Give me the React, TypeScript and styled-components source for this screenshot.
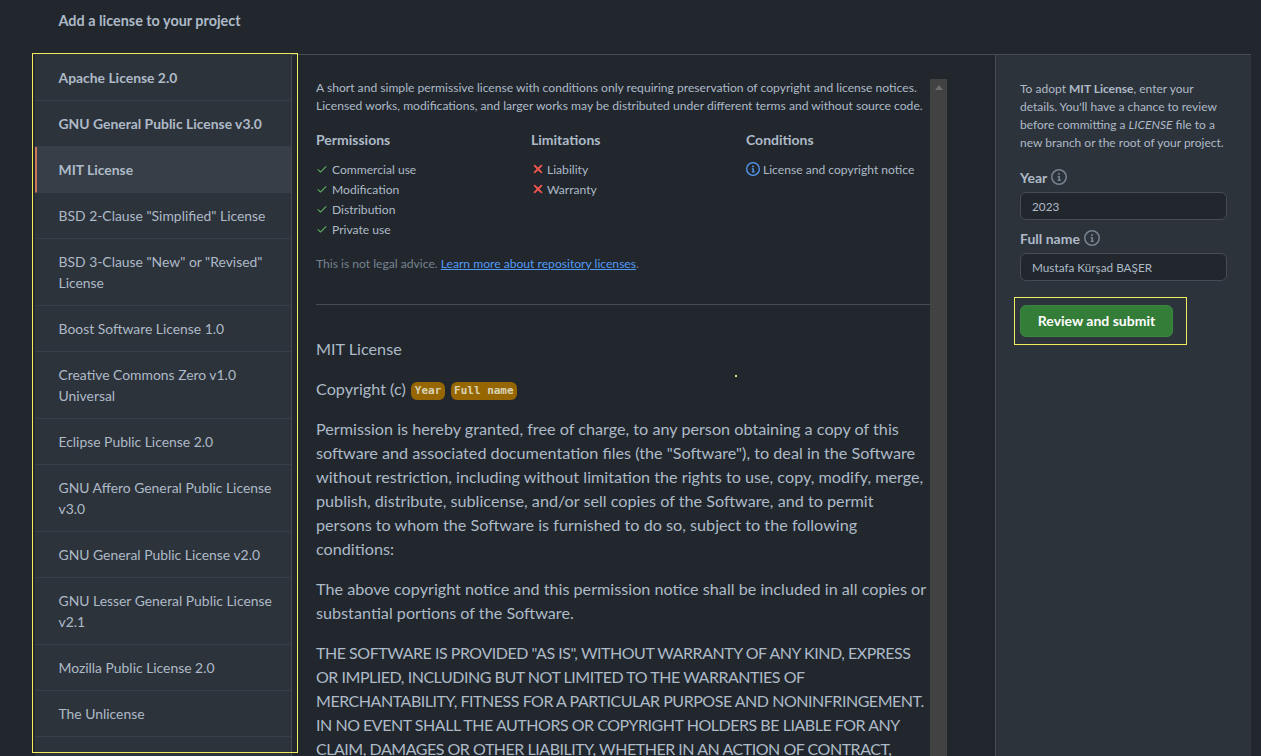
import styled, { createGlobalStyle } from 'styled-components';

const GlobalStyle = createGlobalStyle`
  html, body {
    margin: 0;
    height: 100%;
    overflow: hidden;
    background: #22272e;
  }
  body {
    font-family: Lato, "Noto Sans", sans-serif;
    color: #adbac7;
  }
`;

const CHECK =
  'M13.78 4.22a.75.75 0 0 1 0 1.06l-7.25 7.25a.75.75 0 0 1-1.06 0L2.22 9.28a.751.751 0 0 1 .018-1.042.751.751 0 0 1 1.042-.018L6 10.94l6.72-6.72a.75.75 0 0 1 1.06 0Z';
const CROSS =
  'M3.72 3.72a.75.75 0 0 1 1.06 0L8 6.94l3.22-3.22a.749.749 0 0 1 1.275.326.749.749 0 0 1-.215.734L9.06 8l3.22 3.22a.749.749 0 0 1-.326 1.275.749.749 0 0 1-.734-.215L8 9.06l-3.22 3.22a.751.751 0 0 1-1.042-.018.751.751 0 0 1-.018-1.042L6.94 8 3.72 4.78a.75.75 0 0 1 0-1.06Z';
const INFO =
  'M0 8a8 8 0 1 1 16 0A8 8 0 0 1 0 8Zm8-6.5a6.5 6.5 0 1 0 0 13 6.5 6.5 0 0 0 0-13ZM6.5 7.75A.75.75 0 0 1 7.25 7h1a.75.75 0 0 1 .75.75v2.75h.25a.75.75 0 0 1 0 1.5h-2a.75.75 0 0 1 0-1.5h.25v-2h-.25a.75.75 0 0 1-.75-.75ZM8 6a1 1 0 1 1 0-2 1 1 0 0 1 0 2Z';

const Page = styled.div`
  height: 756px;
  display: flex;
  flex-direction: column;
  padding-right: 10px;
  overflow: hidden;
`;

const Header = styled.h2`
  margin: 0;
  height: 54px;
  box-sizing: border-box;
  padding: 11px 0 0 58.5px;
  font-size: 14.4px;
  line-height: 20px;
  font-weight: 700;
  color: #adbac7;
`;

const Columns = styled.div`
  flex: 1;
  min-height: 0;
  display: flex;
  padding-left: 35px;
`;

const SideWrap = styled.div`
  position: relative;
  width: 257px;
  flex-shrink: 0;
`;

const Highlight = styled.div`
  position: absolute;
  border: 1px solid #f0ec5a;
  pointer-events: none;
  z-index: 2;
`;

const SideHighlight = styled(Highlight)`
  top: -1px;
  left: -3px;
  width: 264px;
  height: 698px;
`;

const Sidebar = styled.nav`
  height: 100%;
  box-sizing: border-box;
  padding-top: 1px;
  background: #2d333b;
  border-right: 1px solid #444c56;
`;

const LicenseItem = styled.a<{ $strong?: boolean; $active?: boolean }>`
  display: block;
  padding: 12px 16px 12px ${({ $active }) => ($active ? '21.5px' : '23.5px')};
  font-size: 13.9px;
  line-height: 21px;
  font-weight: ${({ $strong, $active }) => ($strong || $active ? 700 : 400)};
  color: #adbac7;
  background: ${({ $active }) => ($active ? '#373e47' : 'transparent')};
  border-left: ${({ $active }) => ($active ? '2px solid #c9785c' : 'none')};
  border-bottom: 1px solid #373e47;
`;

const Main = styled.main`
  flex: 1;
  min-width: 0;
  display: flex;
  padding: 24px 48px 0 24px;
  border-top: 1px solid #444c56;
`;

const Content = styled.div`
  position: relative;
  flex: 1;
  min-width: 0;
`;

const Track = styled.div`
  width: 17px;
  flex-shrink: 0;
  background: #424242;
  display: flex;
  justify-content: center;
  padding-top: 6px;
  box-sizing: border-box;
`;

const TrackArrow = styled.div`
  width: 0;
  height: 0;
  border-left: 4px solid transparent;
  border-right: 4px solid transparent;
  border-bottom: 5px solid #6f6f6f;
`;

const Description = styled.p`
  margin: 0;
  font-size: 12.12px;
  line-height: 18px;
  white-space: nowrap;
`;

const Rules = styled.div`
  display: grid;
  grid-template-columns: repeat(3, 215px);
  margin-top: 15px;
`;

const RuleHeading = styled.h4`
  margin: 0 0 9px;
  font-size: 14px;
  line-height: 20px;
  font-weight: 700;
`;

const RuleRow = styled.div`
  display: flex;
  align-items: center;
  height: 20px;
  font-size: 12.1px;
  white-space: nowrap;
`;

const RuleIcon = styled.svg<{ $color: string; $size: number; $gap: number; $heavy?: boolean }>`
  width: ${({ $size }) => $size}px;
  height: ${({ $size }) => $size}px;
  margin-right: ${({ $gap }) => $gap}px;
  fill: ${({ $color }) => $color};
  stroke: ${({ $color, $heavy }) => ($heavy ? $color : 'none')};
  stroke-width: 1;
  flex-shrink: 0;
`;

const Note = styled.p`
  margin: 16px 0 0;
  font-size: 12.12px;
  line-height: 18px;
  color: #768390;
`;

const NoteLink = styled.a`
  color: #539bf5;
  text-decoration: underline;
`;

const Divider = styled.hr`
  margin: 31px 0 32px;
  border: 0;
  border-top: 1px solid #444c56;
`;

const Paragraph = styled.p<{ $caps?: boolean }>`
  margin: 0 0 16px;
  font-size: ${({ $caps }) => ($caps ? '16px' : '16.2px')};
  letter-spacing: ${({ $caps }) => ($caps ? '-0.47px' : 'normal')};
  line-height: 24px;
`;

const Token = styled.code`
  display: inline-block;
  margin-left: 1.5px;
  padding: 0 3.5px;
  height: 18px;
  line-height: 18px;
  vertical-align: 1px;
  border-radius: 6px;
  background: #966600;
  color: #d8d3b8;
  font-family: "DejaVu Sans Mono", "Liberation Mono", monospace;
  font-size: 11px;
  font-weight: 700;
`;

const Dot = styled.span`
  position: absolute;
  top: 296px;
  left: 419px;
  width: 2px;
  height: 2px;
  background: #d8e07a;
`;

const Aside = styled.aside`
  width: 256px;
  flex-shrink: 0;
  box-sizing: border-box;
  padding: 25px 24px 0;
  background: #2d333b;
  border-top: 1px solid #444c56;
  border-left: 1px solid #444c56;
`;

const AsideText = styled.p`
  margin: 0 0 16px;
  font-size: 12px;
  line-height: 18px;
`;

const FieldLabel = styled.label`
  display: flex;
  align-items: center;
  gap: 4px;
  height: 20px;
  box-sizing: border-box;
  padding-bottom: 2px;
  margin-bottom: 4px;
  font-size: 14px;
  font-weight: 700;
`;

const LabelIcon = styled.svg`
  width: 16px;
  height: 16px;
  fill: #768390;
`;

const Input = styled.input`
  display: block;
  width: 207px;
  height: 28px;
  box-sizing: border-box;
  margin-bottom: 9px;
  padding: 0 11px;
  border: 1px solid #444c56;
  border-radius: 6px;
  background: #22272e;
  color: #adbac7;
  font-family: inherit;
  font-size: 11.75px;
  outline: none;
`;

const ButtonWrap = styled.div`
  position: relative;
  margin-top: 24px;
  width: 153px;
`;

const ButtonHighlight = styled(Highlight)`
  top: -8px;
  left: -6px;
  width: 171px;
  height: 46px;
`;

const SubmitButton = styled.button`
  display: block;
  width: 153px;
  height: 32px;
  padding: 0 0 2px;
  border: 1px solid #3b8640;
  border-radius: 6px;
  background: #347d39;
  color: #ffffff;
  font-family: inherit;
  font-size: 14px;
  font-weight: 700;
`;

const licenses: { name: string; strong?: boolean; active?: boolean }[] = [
  { name: 'Apache License 2.0', strong: true },
  { name: 'GNU General Public License v3.0', strong: true },
  { name: 'MIT License', active: true },
  { name: 'BSD 2-Clause "Simplified" License' },
  { name: 'BSD 3-Clause "New" or "Revised" License' },
  { name: 'Boost Software License 1.0' },
  { name: 'Creative Commons Zero v1.0 Universal' },
  { name: 'Eclipse Public License 2.0' },
  { name: 'GNU Affero General Public License v3.0' },
  { name: 'GNU General Public License v2.0' },
  { name: 'GNU Lesser General Public License v2.1' },
  { name: 'Mozilla Public License 2.0' },
  { name: 'The Unlicense' },
];

const rules = [
  {
    title: 'Permissions',
    icon: CHECK,
    color: '#57ab5a',
    size: 12,
    gap: 4,
    items: ['Commercial use', 'Modification', 'Distribution', 'Private use'],
  },
  {
    title: 'Limitations',
    icon: CROSS,
    color: '#e5534b',
    size: 14,
    gap: 2,
    heavy: true,
    items: ['Liability', 'Warranty'],
  },
  { title: 'Conditions', icon: INFO, color: '#539bf5', size: 14, gap: 3, items: ['License and copyright notice'] },
];

const App = () => {
  return (
    <>
      <GlobalStyle />
      <Page>
        <Header>Add a license to your project</Header>
        <Columns>
          <SideWrap>
            <SideHighlight />
            <Sidebar>
              {licenses.map((license) => (
                <LicenseItem key={license.name} $strong={license.strong} $active={license.active}>
                  {license.name}
                </LicenseItem>
              ))}
            </Sidebar>
          </SideWrap>
          <Main>
            <Content>
              <Dot />
              <Description>
                A short and simple permissive license with conditions only requiring preservation of copyright and
                license notices.
                <br />
                Licensed works, modifications, and larger works may be distributed under different terms and without
                source code.
              </Description>
              <Rules>
                {rules.map((rule) => (
                  <div key={rule.title}>
                    <RuleHeading>{rule.title}</RuleHeading>
                    {rule.items.map((item) => (
                      <RuleRow key={item}>
                        <RuleIcon
                          viewBox="0 0 16 16"
                          $color={rule.color}
                          $size={rule.size}
                          $gap={rule.gap}
                          $heavy={rule.heavy}
                        >
                          <path d={rule.icon} />
                        </RuleIcon>
                        {item}
                      </RuleRow>
                    ))}
                  </div>
                ))}
              </Rules>
              <Note>
                This is not legal advice. <NoteLink>Learn more about repository licenses</NoteLink>.
              </Note>
              <Divider />
              <Paragraph>MIT License</Paragraph>
              <Paragraph>
                Copyright (c) <Token>Year</Token> <Token>Full name</Token>
              </Paragraph>
              <Paragraph>
                Permission is hereby granted, free of charge, to any person obtaining a copy of this software and
                associated documentation files (the "Software"), to deal in the Software without restriction,
                including without limitation the rights to use, copy, modify, merge, publish, distribute, sublicense,
                and/or sell copies of the Software, and to permit persons to whom the Software is furnished to do so,
                subject to the following conditions:
              </Paragraph>
              <Paragraph>
                The above copyright notice and this permission notice shall be included in all copies or substantial
                portions of the Software.
              </Paragraph>
              <Paragraph $caps>
                THE SOFTWARE IS PROVIDED "AS IS", WITHOUT WARRANTY OF ANY KIND, EXPRESS OR IMPLIED, INCLUDING BUT NOT
                LIMITED TO THE WARRANTIES OF MERCHANTABILITY, FITNESS FOR A PARTICULAR PURPOSE AND NONINFRINGEMENT. IN
                NO EVENT SHALL THE AUTHORS OR COPYRIGHT HOLDERS BE LIABLE FOR ANY CLAIM, DAMAGES OR OTHER LIABILITY,
                WHETHER IN AN ACTION OF CONTRACT, TORT OR OTHERWISE, ARISING FROM, OUT OF OR IN CONNECTION WITH THE
                SOFTWARE OR THE USE OR OTHER DEALINGS IN THE SOFTWARE.
              </Paragraph>
            </Content>
            <Track>
              <TrackArrow />
            </Track>
          </Main>
          <Aside>
            <AsideText>
              To adopt <strong>MIT License</strong>, enter your details. You'll have a chance to review before
              committing a <em>LICENSE</em> file to a new branch or the root of your project.
            </AsideText>
            <FieldLabel>
              Year
              <LabelIcon viewBox="0 0 16 16">
                <path d={INFO} />
              </LabelIcon>
            </FieldLabel>
            <Input defaultValue="2023" />
            <FieldLabel>
              Full name
              <LabelIcon viewBox="0 0 16 16">
                <path d={INFO} />
              </LabelIcon>
            </FieldLabel>
            <Input defaultValue="Mustafa Kürşad BAŞER" />
            <ButtonWrap>
              <ButtonHighlight />
              <SubmitButton>Review and submit</SubmitButton>
            </ButtonWrap>
          </Aside>
        </Columns>
      </Page>
    </>
  );
};

export default App;
